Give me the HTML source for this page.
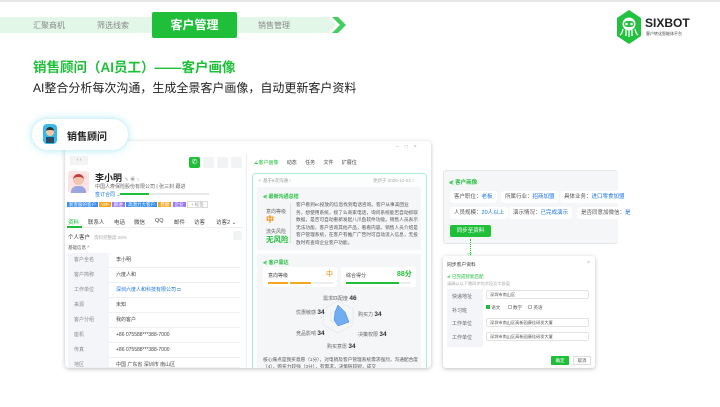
<!DOCTYPE html>
<html><head><meta charset="utf-8"><style>
*{margin:0;padding:0;box-sizing:border-box}
body{width:720px;height:407px;background:#fff;position:relative;overflow:hidden;font-family:"Liberation Sans","Noto Sans CJK SC",sans-serif;color:#333}
.a{position:absolute;white-space:nowrap}
.s{font-size:5px;color:#666}
.chip{position:absolute;background:#fff;border-radius:3px;font-size:5.5px;padding:0 4px;height:12px;line-height:12px;color:#555}
.chip b{color:#1a73e8;font-weight:normal}
.row{position:absolute;left:68px;width:172px;height:15px;border-bottom:1px solid #eef0f3;font-size:5px}
.row i{position:absolute;left:0;top:0;width:41px;height:15px;background:#f3f5f8;font-style:normal;color:#888;padding-left:6px;line-height:15px}
.row span{position:absolute;left:48px;line-height:15px;color:#444}
.tab{position:absolute;top:218px;font-size:5.5px;color:#444}
</style></head><body>
<div class="a" style="left:0;top:0;width:720px;height:2px;background:#e6e6e6"></div>
<div class="a" style="left:0;top:17px;width:330px;height:16px;background:#e2f7e8"></div>
<svg class="a" style="left:318px;top:17px" width="30" height="16"><polygon points="0,0 10,0 18,8 10,16 0,16" fill="#e2f7e8"/><polygon points="14,0 20,0 28,8 20,16 14,16 22,8" fill="#3fcf5f"/></svg>
<div class="a" style="left:33px;top:20px;font-size:8px;color:#888">汇聚商机</div>
<div class="a" style="left:97px;top:20px;font-size:8px;color:#888">筛选线索</div>
<div class="a" style="left:152px;top:12px;width:85px;height:26px;background:#1fbf3a;border-radius:2px;color:#fff;font-size:12px;line-height:26px;text-align:center;font-weight:bold">客户管理</div>
<div class="a" style="left:258px;top:20px;font-size:8px;color:#888">销售管理</div>
<svg class="a" style="left:616px;top:9px" width="26" height="36"><polygon points="13,1 25,9 25,27 13,35 1,27 1,9" fill="#22c13f"/><circle cx="13" cy="15" r="6.5" fill="#fff"/><rect x="8" y="12" width="10" height="6" rx="3" fill="#22c13f"/><circle cx="10.5" cy="15" r="1.3" fill="#fff"/><circle cx="15.5" cy="15" r="1.3" fill="#fff"/><path d="M7 20 q-1 5 -3 6 M10 21 v6 M13 21 v7 M16 21 v6 M19 20 q1 5 3 6" stroke="#fff" stroke-width="1.3" fill="none"/></svg>
<div class="a" style="left:645px;top:16px;font-size:12px;font-weight:bold;color:#222">SIXBOT</div>
<div class="a" style="left:646px;top:31px;font-size:4px;color:#444">客户转化智能体平台</div>
<div class="a" style="left:33px;top:56px;font-size:13.5px;font-weight:bold;color:#1fbf3a">销售顾问（AI员工）——客户画像</div>
<div class="a" style="left:33px;top:79px;font-size:12px;color:#222">AI整合分析每次沟通，生成全景客户画像，自动更新客户资料</div>
<div class="a" style="left:65px;top:141px;width:366px;height:227px;background:#fff;border-radius:4px;box-shadow:0 1px 4px rgba(0,0,0,.25)"></div>
<div class="a" style="left:396px;top:144px;font-size:5px;color:#aaa;letter-spacing:6px">–□×</div>
<div class="a" style="left:32px;top:119px;width:96px;height:31px;background:#fff;border-radius:16px;box-shadow:0 0 8px rgba(120,220,240,.7)"></div>
<div class="a" style="left:43px;top:124px;width:14px;height:20px;border-radius:4px;background:#3ab9e8"></div>
<div class="a" style="left:46px;top:127px;width:8px;height:9px;border-radius:4px;background:#f1c9a6;border-top:3px solid #333"></div>
<div class="a" style="left:46px;top:137px;width:8px;height:6px;background:#2d4d66"></div>
<div class="a" style="left:67px;top:128px;font-size:10px;font-weight:bold;color:#222">销售顾问</div>
<div class="a" style="left:70px;top:156px;width:18px;height:9px;background:#f2f3f5;font-size:5px;color:#999;text-align:center;line-height:9px">‹ ›</div>
<div class="a" style="left:189px;top:157px;width:11px;height:11px;background:#1fbf3a;border-radius:2px;color:#fff;font-size:7px;text-align:center;line-height:11px">✆</div>
<div class="a" style="left:203px;top:157px;width:11px;height:11px;background:#f2f3f5;border-radius:2px"></div>
<div class="a" style="left:217px;top:157px;width:11px;height:11px;background:#f2f3f5;border-radius:2px"></div>
<div class="a" style="left:231px;top:157px;width:11px;height:11px;background:#f2f3f5;border-radius:2px"></div>
<div class="a" style="left:68px;top:171px;width:21px;height:22px;background:#fde3e3;border-radius:3px"></div>
<div class="a" style="left:73px;top:174px;width:11px;height:11px;background:#f5c4b0;border-radius:50%;border-top:3px solid #c43c3c"></div>
<div class="a" style="left:71px;top:186px;width:15px;height:7px;background:#9aa7e0;border-radius:6px 6px 0 0"></div>
<div class="a" style="left:95px;top:171px;font-size:9px;font-weight:bold;color:#222">李小明 <span style="font-size:5px;color:#aaa;font-weight:normal">✎ ◉ ○</span></div>
<div class="a s" style="left:95px;top:183px">中国人寿保险股份有限公司 | 张三封 跟进</div>
<div class="a" style="left:95px;top:191px;font-size:5px;color:#1a73e8">签订合同 ⌄</div>
<div class="a" style="left:120px;top:193px;width:89px;height:2px;background:#e6e8eb"></div>
<div class="a" style="left:120px;top:193px;width:29px;height:2px;background:#1fbf3a"></div>
<div class="a" style="left:67px;top:201px;height:8px;font-size:4.5px;color:#fff;line-height:8px">
<span style="background:#3b8ff0;padding:0 2px">新客服的客户</span> <span style="background:#f5a623;padding:0 2px">VIP</span> <span style="background:#9b7cf0;padding:0 2px">跟进</span> <span style="background:#3b8ff0;padding:0 2px">高潜力大客户</span> <span style="background:#f5a623;padding:0 2px">稳健</span> <span style="background:#9b7cf0;padding:0 2px">企业</span> <span style="border:1px solid #ddd;color:#999;padding:0 3px">+ 标签</span></div>
<div class="tab" style="left:68px;color:#1fbf3a">资料</div>
<div class="tab" style="left:88px">联系人</div>
<div class="tab" style="left:114px">电话</div>
<div class="tab" style="left:134px">微信</div>
<div class="tab" style="left:155px">QQ</div>
<div class="tab" style="left:174px">邮件</div>
<div class="tab" style="left:194px">访客</div>
<div class="tab" style="left:216px">访客2 ⌄</div>
<div class="a" style="left:67px;top:227px;width:176px;height:1px;background:#eee"></div>
<div class="a" style="left:67px;top:226px;width:15px;height:2px;background:#1fbf3a"></div>
<div class="a" style="left:68px;top:233px;font-size:5.5px;color:#333">个人客户 <span style="color:#aaa;font-size:4.5px">&nbsp;&nbsp;资料完整度 28%</span></div>
<div class="a" style="left:233px;top:231px;width:9px;height:9px;background:#f2f3f5;border-radius:2px"></div>
<div class="a" style="left:68px;top:245px;font-size:4.5px;color:#555">基础信息 ^</div>
<div class="row" style="top:253px"><i>客户全名</i><span>李小明</span></div>
<div class="row" style="top:268px"><i>客户简称</i><span>六度人和</span></div>
<div class="row" style="top:283px"><i>工作单位</i><span style="color:#1a73e8">深圳六度人和科技有限公司 ◘</span></div>
<div class="row" style="top:298px"><i>来源</i><span>未知</span></div>
<div class="row" style="top:313px"><i>客户分组</i><span>我的客户</span></div>
<div class="row" style="top:328px"><i>座机</i><span>+86 075588***388-7000</span></div>
<div class="row" style="top:343px"><i>传真</i><span>+86 075588***388-7000</span></div>
<div class="row" style="top:358px;height:10px;overflow:hidden"><i>地区</i><span>中国 广东省 深圳市 南山区</span></div>
<div class="a" style="left:246px;top:154px;width:1px;height:214px;background:#eee"></div>
<div class="a" style="left:254px;top:159px;font-size:5px;color:#444">
<span style="color:#1fbf3a">⟁客户画像</span>&nbsp;&nbsp;&nbsp;&nbsp;&nbsp;&nbsp;动态&nbsp;&nbsp;&nbsp;&nbsp;&nbsp;&nbsp;任务&nbsp;&nbsp;&nbsp;&nbsp;&nbsp;&nbsp;文件&nbsp;&nbsp;&nbsp;&nbsp;&nbsp;&nbsp;扩展位</div>
<div class="a" style="left:252px;top:173px;width:175px;height:195px;border:1px solid #a9ecd8;border-bottom:none;border-radius:3px 3px 0 0;background:#fcfefd"></div>
<div class="a" style="left:258px;top:178px;font-size:4.5px;color:#999">✧ 基于6次沟通 ›</div>
<div class="a" style="left:373px;top:178px;font-size:4.5px;color:#aaa">更新于 2025-12-03 ○</div>
<div class="a" style="left:257px;top:187px;width:164px;height:63px;background:#f5f6f8;border-radius:2px"></div>
<div class="a" style="left:263px;top:193px;font-size:5px;color:#1fbf3a;font-weight:bold">⋞ 最新沟通总结</div>
<div class="a s" style="left:266px;top:208px">意向等级</div>
<div class="a" style="left:266px;top:214px;font-size:8px;color:#f58a07;font-weight:bold">中</div>
<div class="a s" style="left:266px;top:228px">流失风险</div>
<div class="a" style="left:266px;top:234px;font-size:7.5px;color:#1fbf3a;font-weight:bold">无风险</div>
<div class="a" style="left:290px;top:203px;width:1px;height:40px;background:#e0e0e0"></div>
<div class="a" style="left:296px;top:201px;width:122px;white-space:normal;font-size:4.7px;line-height:7.5px;color:#555">客户看到ec投放的信息找到电话咨询。客户从事美团业务，想使用系统，接了么商家电话，询问系统能否自动抓取数据，是否可自动重新发起八爪鱼软件功能。销售人员表示无法功能，客户咨询其他产品，看看内容。销售人员介绍是客户管理系统，在客户有推广广告时可自动流入信息，无投放时有查询企业客户功能。</div>
<div class="a" style="left:257px;top:254px;width:164px;height:114px;background:#f5f6f8;border-radius:2px"></div>
<div class="a" style="left:263px;top:259px;font-size:5px;color:#1fbf3a;font-weight:bold">⋞ 客户需达</div>
<div class="a" style="left:263px;top:267px;width:74px;height:20px;background:#fff;border-radius:2px"></div>
<div class="a s" style="left:268px;top:272px;color:#444">意向等级</div>
<div class="a" style="left:326px;top:269px;font-size:7px;color:#f58a07">中</div>
<div class="a" style="left:268px;top:282px;width:20px;height:2px;background:#f5a623"></div>
<div class="a" style="left:290px;top:282px;width:21px;height:2px;background:#f5a623"></div>
<div class="a" style="left:313px;top:282px;width:20px;height:2px;background:#eee"></div>
<div class="a" style="left:341px;top:267px;width:75px;height:20px;background:#fff;border-radius:2px"></div>
<div class="a s" style="left:346px;top:272px;color:#444">综合得分</div>
<div class="a" style="left:397px;top:269px;font-size:7px;color:#1fbf3a;font-weight:bold">88分</div>
<div class="a" style="left:346px;top:282px;width:53px;height:2px;background:#1fbf3a"></div>
<div class="a" style="left:399px;top:282px;width:12px;height:2px;background:#eee"></div>
<svg class="a" style="left:322px;top:300px" width="32" height="34"><g fill="none" stroke="#ddd" stroke-width=".5"><polygon points="16,1 31,9 31,25 16,33 1,25 1,9"/><polygon points="16,9 23,13 23,21 16,25 9,21 9,13"/></g><polygon points="16,5 23,12 27,22 16,26 12,20 13,12" fill="#5aa0f0" fill-opacity=".85" stroke="#3a7fe0" stroke-width=".5"/></svg>
<div class="a s" style="left:323px;top:295px">需求匹配度 <b style="font-size:6.5px;color:#333">46</b></div>
<div class="a s" style="left:296px;top:309px">优惠敏感 <b style="font-size:6.5px;color:#333">34</b></div>
<div class="a s" style="left:358px;top:311px">购买力 <b style="font-size:6.5px;color:#333">34</b></div>
<div class="a s" style="left:296px;top:330px">竞品影响 <b style="font-size:6.5px;color:#333">34</b></div>
<div class="a s" style="left:358px;top:331px">决策权限 <b style="font-size:6.5px;color:#333">34</b></div>
<div class="a s" style="left:327px;top:343px">购买意愿 <b style="font-size:6.5px;color:#333">34</b></div>
<div class="a" style="left:263px;top:356px;width:155px;height:12px;overflow:hidden;white-space:normal;font-size:4.7px;line-height:7px;color:#555">核心痛点是我买意愿（1分），对电销及客户管理系统需求强烈，沟通配合度（4），购买力较强（3分），有需求，决策链较短，成交</div>
<div class="a" style="left:443px;top:170px;width:175px;height:74px;background:#f5f6f8;border:1px solid #e3e5e8;border-radius:3px;border-right:none"></div>
<div class="a" style="left:449px;top:178px;font-size:5.5px;color:#1fbf3a;font-weight:bold">⋞ 客户画像</div>
<div class="chip" style="left:450px;top:191px">客户职位：<b>老板</b></div>
<div class="chip" style="left:501px;top:191px">所属行业：<b>招商加盟</b></div>
<div class="chip" style="left:560px;top:191px">具体业务：<b>进口零食加盟</b></div>
<div class="chip" style="left:450px;top:207px">人员规模：<b>20人以上</b></div>
<div class="chip" style="left:509px;top:207px">演示情况：<b>已完成演示</b></div>
<div class="chip" style="left:577px;top:207px">是否同意加微信：<b>是</b></div>
<div class="a" style="left:450px;top:225px;width:41px;height:12px;background:#1fbf3a;border-radius:2px;color:#fff;font-size:5.5px;text-align:center;line-height:12px">同步至资料</div>
<div class="a" style="left:470px;top:239px;width:0;height:16px;border-left:1.5px dotted #1fbf3a"></div>
<div class="a" style="left:467px;top:252px;font-size:5px;color:#1fbf3a">▽</div>
<div class="a" style="left:443px;top:256px;width:152px;height:112px;background:#fff;border-radius:3px;box-shadow:0 1px 4px rgba(0,0,0,.25)"></div>
<div class="a" style="left:447px;top:261px;font-size:4.8px;color:#333">同步客户资料</div>
<div class="a" style="left:587px;top:260px;font-size:5px;color:#aaa">×</div>
<div class="a" style="left:447px;top:274px;font-size:4.5px;color:#1fbf3a">⋞ 已完成智能匹配</div>
<div class="a" style="left:447px;top:281px;font-size:4.2px;color:#aaa">请确认以下需同步的字段及字段值</div>
<div class="a" style="left:447px;top:289px;width:36px;height:58px;background:#f3f5f8"></div>
<div class="a s" style="left:452px;top:293px">快递地址</div>
<div class="a s" style="left:452px;top:307px">补习班</div>
<div class="a s" style="left:452px;top:320px">工作单位</div>
<div class="a s" style="left:452px;top:334px">工作单位</div>
<div class="a" style="left:486px;top:290px;width:103px;height:9px;border:1px solid #e3e3e3;border-radius:2px;font-size:4.2px;line-height:8px;padding-left:3px;color:#555">深圳市南山区</div>
<div class="a" style="left:486px;top:305px;font-size:4.5px;color:#555"><span style="display:inline-block;width:4px;height:4px;background:#1fbf3a"></span> 语文&nbsp;&nbsp;&nbsp;&nbsp;&nbsp;&nbsp;<span style="display:inline-block;width:4px;height:4px;border:.5px solid #bbb"></span> 数学&nbsp;&nbsp;&nbsp;&nbsp;&nbsp;<span style="display:inline-block;width:4px;height:4px;border:.5px solid #bbb"></span> 英语</div>
<div class="a" style="left:486px;top:318px;width:103px;height:9px;border:1px solid #e3e3e3;border-radius:2px;font-size:4.2px;line-height:8px;padding-left:3px;color:#555">深圳市南山区高新园康佳研发大厦</div>
<div class="a" style="left:486px;top:332px;width:103px;height:9px;border:1px solid #e3e3e3;border-radius:2px;font-size:4.2px;line-height:8px;padding-left:3px;color:#555">深圳市南山区高新园康佳研发大厦</div>
<div class="a" style="left:551px;top:356px;width:18px;height:9px;background:#1fbf3a;border-radius:1px;color:#fff;font-size:4.5px;text-align:center;line-height:9px">确定</div>
<div class="a" style="left:573px;top:356px;width:18px;height:9px;border:1px solid #ddd;border-radius:1px;color:#555;font-size:4.5px;text-align:center;line-height:8px">取消</div>
</body></html>
